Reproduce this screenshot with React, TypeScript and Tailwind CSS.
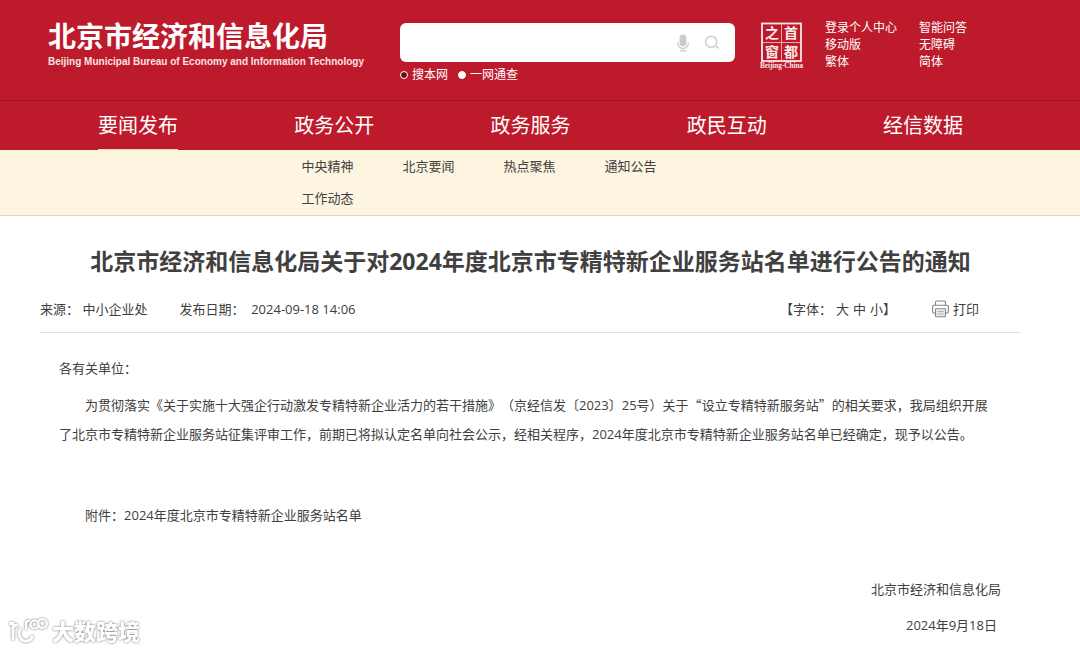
import { useState } from "react";

const navItems = ["要闻发布", "政务公开", "政务服务", "政民互动", "经信数据"];
const subItems = ["中央精神", "北京要闻", "热点聚焦", "通知公告", "工作动态"];
const userLinks = ["登录个人中心", "移动版", "繁体"];
const toolLinks = ["智能问答", "无障碍", "简体"];

function CapitalWindowLogo() {
  return (
    <svg width="46" height="48" viewBox="0 0 46 48" fill="none" role="img" aria-label="首都之窗">
      <rect x="3" y="1.5" width="39" height="37.5" stroke="#fbe9ea" strokeWidth="1.8" />
      <path d="M22.5 2V39M4 20.5H41" stroke="#f0b9be" strokeWidth="0.9" />
      <g fill="#fbe9ea" fontFamily="'Noto Sans CJK SC', sans-serif" fontSize="14" fontWeight="700" textAnchor="middle">
        <text x="13" y="16">之</text>
        <text x="32" y="16">首</text>
        <text x="13" y="35">窗</text>
        <text x="32" y="35">都</text>
      </g>
      <text x="22.5" y="46" fill="#fbe9ea" fontFamily="'Liberation Serif', serif" fontSize="7.2" fontWeight="700" textAnchor="middle">
        Beijing-China
      </text>
    </svg>
  );
}

function MicIcon() {
  return (
    <svg width="12" height="18" viewBox="0 0 12 18" fill="none" aria-hidden="true">
      <rect x="2.6" y="0.5" width="6.8" height="11.8" rx="3.4" fill="#cbcbcb" />
      <path d="M0.8 8.2v1.6a5.2 4.6 0 0 0 10.4 0V8.2M6 14.4v2.2M2.6 16.8h6.8" stroke="#cbcbcb" strokeWidth="1.2" />
    </svg>
  );
}

function SearchIcon() {
  return (
    <svg width="16" height="16" viewBox="0 0 16 16" fill="none" aria-hidden="true">
      <circle cx="7.2" cy="6.8" r="5.6" stroke="#cfcfcf" strokeWidth="1.6" />
      <path d="M11.2 10.6L14.6 13.2" stroke="#cfcfcf" strokeWidth="1.8" />
    </svg>
  );
}

function PrinterIcon() {
  return (
    <svg width="17" height="18" viewBox="0 0 17 18" fill="none" stroke="#858585" strokeWidth="1.1" aria-hidden="true">
      <path d="M3.5 5V2a1 1 0 0 1 1-1h8a1 1 0 0 1 1 1v3" />
      <path d="M3.5 13H2a1.4 1.4 0 0 1-1.4-1.4V6.7A1.5 1.5 0 0 1 2 5.2h13a1.5 1.5 0 0 1 1.4 1.5v4.9A1.4 1.4 0 0 1 15 13h-1.5" />
      <rect x="3.5" y="8.8" width="10" height="8" rx="0.8" fill="#eeeeee" />
      <path d="M5.3 11.6h6.4M5.3 14h6.4" stroke="#a5a5a5" strokeWidth="0.9" />
    </svg>
  );
}

function Watermark() {
  return (
    <div className="absolute bottom-1 left-2 flex items-center gap-1 drop-shadow-[0_0_1px_#707070]">
      <svg width="40" height="30" viewBox="0 0 40 30" fill="none" stroke="#ffffff" strokeWidth="2.8" aria-hidden="true">
        <path d="M1 7.5H5V24M5 13C5.5 10 7.5 8.5 10 9" />
        <path d="M13 12.5C9.5 17 11.5 25 18 25C22 25 24 22.5 24.5 19.5" />
        <path d="M18 4.500V14M18 8.500C18.500 5.500 20 4.500 22 5" strokeWidth="2.2" />
        <circle cx="26.5" cy="8.5" r="4" strokeWidth="2.2" />
        <circle cx="34.5" cy="7.5" r="4.4" strokeWidth="2.2" />
      </svg>
      <span className="text-[22px] leading-8 font-black text-white">大数跨境</span>
    </div>
  );
}

function LinkColumn({ links }: { links: string[] }) {
  return (
    <ul className="flex flex-col">
      {links.map((label) => (
        <li key={label} className="leading-[17px]">
          <a href="#">{label}</a>
        </li>
      ))}
    </ul>
  );
}

function ScopeRadio({ label, checked, onSelect }: { label: string; checked: boolean; onSelect: () => void }) {
  return (
    <label className="flex items-center gap-1">
      <input
        type="radio"
        name="scope"
        checked={checked}
        onChange={onSelect}
        className="size-2 appearance-none rounded-full border border-white bg-white checked:bg-[#6d0a12]"
      />
      {label}
    </label>
  );
}

export default function App() {
  const [scope, setScope] = useState("site");

  return (
    <div className="relative min-h-screen bg-white font-['Open_Sans','Noto_Sans_CJK_SC',sans-serif] text-[13px] text-[#404040] [text-spacing-trim:space-all]">
      <header className="bg-[#bd1b2c] text-white">
        <div className="flex h-[100px] items-start pl-12">
          <div className="w-[352px] shrink-0 pt-4">
            <div className="text-[28px] leading-10 font-bold">北京市经济和信息化局</div>
            <div className="font-['Liberation_Sans',sans-serif] text-[10px] leading-3 font-bold whitespace-nowrap text-[#fbe3e5]">
              Beijing Municipal Bureau of Economy and Information Technology
            </div>
          </div>
          <form className="w-[335px] shrink-0 pt-[23px] text-xs" onSubmit={(e) => e.preventDefault()}>
            <div className="flex h-[39px] items-center gap-[15px] rounded-md bg-white pr-[15px] pl-3">
              <input type="text" aria-label="搜索" className="min-w-0 flex-1 text-sm text-gray-800 outline-none" />
              <button type="button" aria-label="语音输入">
                <MicIcon />
              </button>
              <button type="submit" aria-label="搜索">
                <SearchIcon />
              </button>
            </div>
            <div className="flex gap-2.5 pt-1 leading-[18px]">
              <ScopeRadio label="搜本网" checked={scope === "site"} onSelect={() => setScope("site")} />
              <ScopeRadio label="一网通查" checked={scope === "all"} onSelect={() => setScope("all")} />
            </div>
          </form>
          <div className="flex gap-5 pt-[19px] pl-6 text-xs">
            <div className="pt-[3px]">
              <CapitalWindowLogo />
            </div>
            <div className="flex gap-[22px]">
              <LinkColumn links={userLinks} />
              <LinkColumn links={toolLinks} />
            </div>
          </div>
        </div>
        <nav className="border-t border-[#9c1422] pr-[59px] pl-10">
          <ul className="grid grid-cols-5 text-center">
            {navItems.map((label, i) => (
              <li key={label}>
                <a
                  href="#"
                  className={
                    i === 0
                      ? "inline-block h-[49px] border-b border-[#f5d9a5] align-top text-xl leading-[50px]"
                      : "inline-block h-[49px] align-top text-xl leading-[50px]"
                  }
                >
                  {label}
                </a>
              </li>
            ))}
          </ul>
        </nav>
      </header>

      <nav aria-label="要闻发布" className="border-b border-[#ecd6a6] bg-[#fef5e0] pr-[59px] pb-px pl-10">
        <ul className="mx-auto grid w-[458px] grid-cols-[repeat(4,101px)] leading-8">
          {subItems.map((label) => (
            <li key={label}>
              <a href="#">{label}</a>
            </li>
          ))}
        </ul>
      </nav>

      <main className="pr-[59px] pl-10">
        <h1 className="pt-7 text-center text-[23px] leading-[34px] font-bold">
          北京市经济和信息化局关于对2024年度北京市专精特新企业服务站名单进行公告的通知
        </h1>
        <div className="flex items-center border-b border-[#e2e2e2] pt-5 pr-[42px] pb-3 leading-[22px]">
          <span className="mr-8">来源：&nbsp;中小企业处</span>
          <span>发布日期：&nbsp;&nbsp;2024-09-18 14:06</span>
          <div className="ml-auto flex items-center">
            <span>【字体：</span>
            <div className="flex gap-1 pl-1">
              <button type="button">大</button>
              <button type="button">中</button>
              <button type="button">小</button>
            </div>
            <span>】</span>
          </div>
          <button type="button" className="ml-9 flex items-center gap-1">
            <PrinterIcon />
            打印
          </button>
        </div>
        <article className="pt-[21px] pr-5 pl-[19px] leading-[29px]">
          <div className="pr-1">
            <p className="mb-[7px]">各有关单位：</p>
            <p className="indent-[2em]">
              为贯彻落实《关于实施十大强企行动激发专精特新企业活力的若干措施》（京经信发〔2023〕25号）关于
              <span className="font-['Noto_Sans_CJK_SC',sans-serif]">“</span>
              设立专精特新服务站
              <span className="font-['Noto_Sans_CJK_SC',sans-serif]">”</span>
              的相关要求，我局组织开展了北京市专精特新企业服务站征集评审工作，前期已将拟认定名单向社会公示，经相关程序，2024年度北京市专精特新企业服务站名单已经确定，现予以公告。
            </p>
            <p className="mt-[52px] indent-[2em]">
              附件：<a href="#">2024年度北京市专精特新企业服务站名单</a>
            </p>
          </div>
          <p className="mt-[45px] text-right">北京市经济和信息化局</p>
          <p className="mt-[7px] pr-1 text-right">2024年9月18日</p>
        </article>
      </main>
      <Watermark />
    </div>
  );
}
